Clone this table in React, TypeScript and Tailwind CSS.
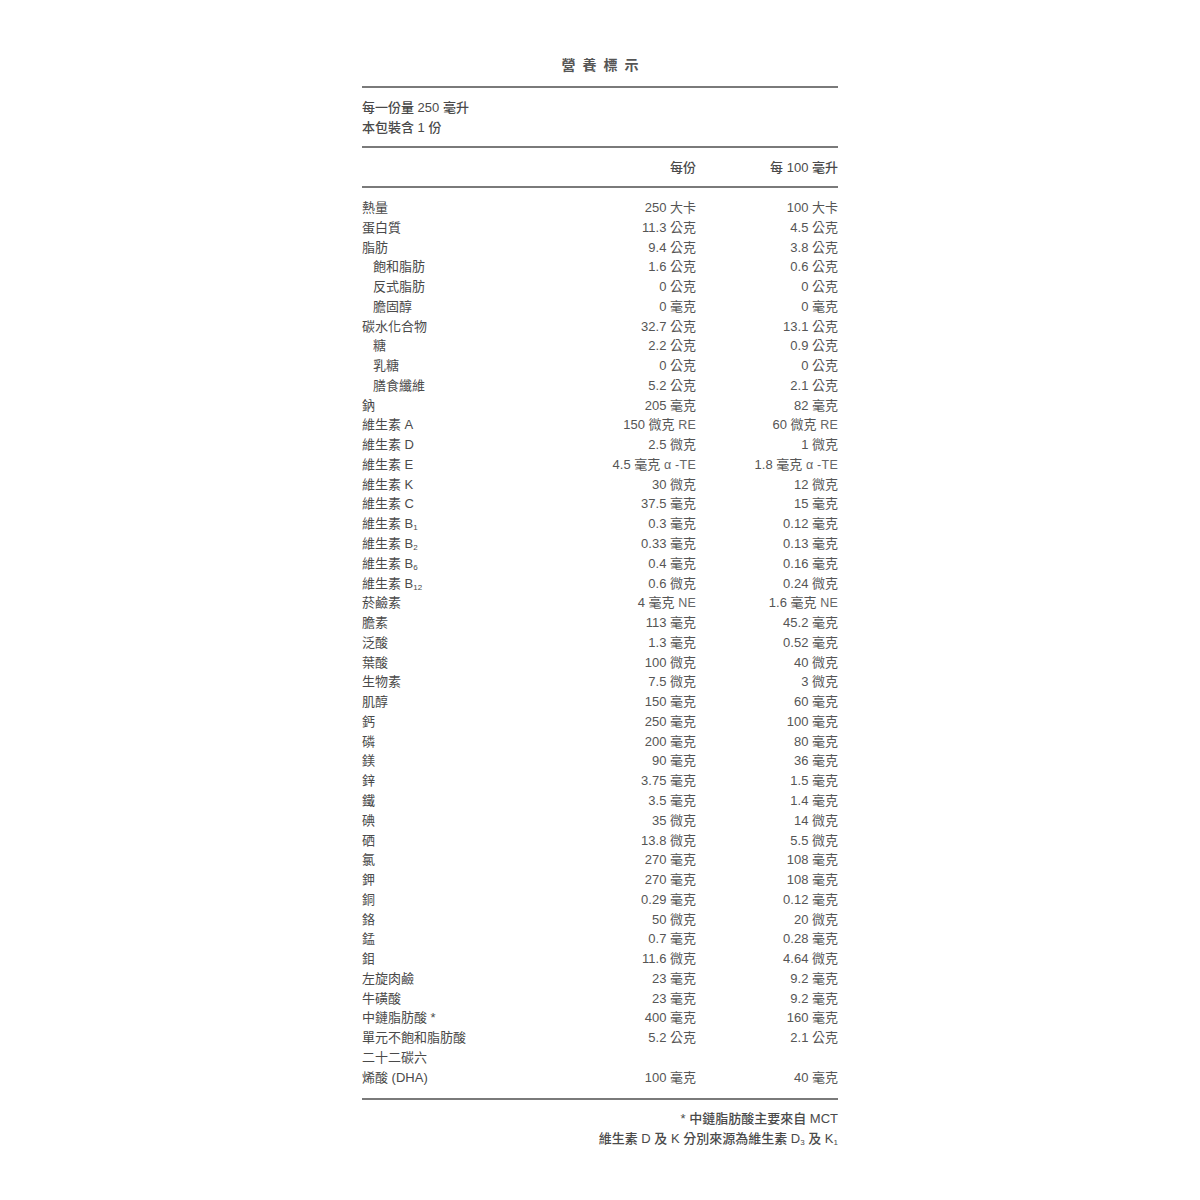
import React from "react";

type Row = { label: React.ReactNode; a?: React.ReactNode; b?: React.ReactNode; indent?: boolean };

const S = ({ children }: { children: React.ReactNode }) => (
  <span className="relative top-[2px] text-[8px] leading-none">{children}</span>
);

const L = ({ children }: { children: React.ReactNode }) => (
  <span className="text-[12.5px] font-light text-[#666] tracking-[0.02em]">{children}</span>
);

const rows: Row[] = [
  { label: "熱量", a: "250 大卡", b: "100 大卡" },
  { label: "蛋白質", a: "11.3 公克", b: "4.5 公克" },
  { label: "脂肪", a: "9.4 公克", b: "3.8 公克" },
  { label: "飽和脂肪", a: "1.6 公克", b: "0.6 公克", indent: true },
  { label: "反式脂肪", a: "0 公克", b: "0 公克", indent: true },
  { label: "膽固醇", a: "0 毫克", b: "0 毫克", indent: true },
  { label: "碳水化合物", a: "32.7 公克", b: "13.1 公克" },
  { label: "糖", a: "2.2 公克", b: "0.9 公克", indent: true },
  { label: "乳糖", a: "0 公克", b: "0 公克", indent: true },
  { label: "膳食纖維", a: "5.2 公克", b: "2.1 公克", indent: true },
  { label: "鈉", a: "205 毫克", b: "82 毫克" },
  { label: "維生素 A", a: <>150 微克 <L>RE</L></>, b: <>60 微克 <L>RE</L></> },
  { label: "維生素 D", a: "2.5 微克", b: "1 微克" },
  { label: "維生素 E", a: <>4.5 毫克 <L>α -TE</L></>, b: <>1.8 毫克 <L>α -TE</L></> },
  { label: "維生素 K", a: "30 微克", b: "12 微克" },
  { label: "維生素 C", a: "37.5 毫克", b: "15 毫克" },
  { label: <>維生素 B<S>1</S></>, a: "0.3 毫克", b: "0.12 毫克" },
  { label: <>維生素 B<S>2</S></>, a: "0.33 毫克", b: "0.13 毫克" },
  { label: <>維生素 B<S>6</S></>, a: "0.4 毫克", b: "0.16 毫克" },
  { label: <>維生素 B<S>12</S></>, a: "0.6 微克", b: "0.24 微克" },
  { label: "菸鹼素", a: <>4 毫克 <L>NE</L></>, b: <>1.6 毫克 <L>NE</L></> },
  { label: "膽素", a: "113 毫克", b: "45.2 毫克" },
  { label: "泛酸", a: "1.3 毫克", b: "0.52 毫克" },
  { label: "葉酸", a: "100 微克", b: "40 微克" },
  { label: "生物素", a: "7.5 微克", b: "3 微克" },
  { label: "肌醇", a: "150 毫克", b: "60 毫克" },
  { label: "鈣", a: "250 毫克", b: "100 毫克" },
  { label: "磷", a: "200 毫克", b: "80 毫克" },
  { label: "鎂", a: "90 毫克", b: "36 毫克" },
  { label: "鋅", a: "3.75 毫克", b: "1.5 毫克" },
  { label: "鐵", a: "3.5 毫克", b: "1.4 毫克" },
  { label: "碘", a: "35 微克", b: "14 微克" },
  { label: "硒", a: "13.8 微克", b: "5.5 微克" },
  { label: "氯", a: "270 毫克", b: "108 毫克" },
  { label: "鉀", a: "270 毫克", b: "108 毫克" },
  { label: "銅", a: "0.29 毫克", b: "0.12 毫克" },
  { label: "鉻", a: "50 微克", b: "20 微克" },
  { label: "錳", a: "0.7 毫克", b: "0.28 毫克" },
  { label: "鉬", a: "11.6 微克", b: "4.64 微克" },
  { label: "左旋肉鹼", a: "23 毫克", b: "9.2 毫克" },
  { label: "牛磺酸", a: "23 毫克", b: "9.2 毫克" },
  { label: "中鏈脂肪酸 *", a: "400 毫克", b: "160 毫克" },
  { label: "單元不飽和脂肪酸", a: "5.2 公克", b: "2.1 公克" },
  { label: "二十二碳六" },
  { label: "烯酸 (DHA)", a: "100 毫克", b: "40 毫克" },
];

const font = { fontFamily: '"Liberation Sans", "Noto Sans CJK TC", sans-serif' };

export default function App() {
  return (
    <div className="min-h-[1200px] w-full bg-white" style={font}>
      <div className="mx-auto w-[476px] pt-[55px] text-[13px] text-[#555]">
        <div className="h-[20px] text-center text-[14px] font-bold leading-[20px] tracking-[0.5em] text-[#555] pl-[0.5em]">
          營養標示
        </div>
        <div className="mt-[11px] h-[2px] bg-[#7a7a7a]" />
        <div className="pt-[10px] pb-[8px] leading-[20px] font-medium text-[#4a4a4a]">
          <div className="h-[20px]">每一份量 250 毫升</div>
          <div className="h-[20px]">本包裝含 1 份</div>
        </div>
        <div className="h-[2px] bg-[#7a7a7a]" />
        <div className="grid h-[38px] grid-cols-[192px_142px_142px] pt-[10px] pb-[8px] leading-[20px] font-medium text-[#4a4a4a]">
          <div />
          <div className="text-right">每份</div>
          <div className="text-right">每 100 毫升</div>
        </div>
        <div className="h-[2px] bg-[#7a7a7a]" />
        <div className="pt-[10px] pb-[11px]">
          {rows.map((r, i) => (
            <div key={i} className="grid h-[19.77px] grid-cols-[192px_142px_142px] leading-[19.77px]">
              <div className={`text-[#4a4a4a] whitespace-nowrap ${r.indent ? "pl-[11px]" : ""}`}>{r.label}</div>
              <div className="text-right whitespace-nowrap text-[#555]">{r.a}</div>
              <div className="text-right whitespace-nowrap text-[#555]">{r.b}</div>
            </div>
          ))}
        </div>
        <div className="h-[2px] bg-[#7a7a7a]" />
        <div className="pt-[9px] text-right leading-[20px] font-medium text-[#4a4a4a]">
          <div className="h-[20px]">* 中鏈脂肪酸主要來自 MCT</div>
          <div className="h-[20px]">維生素 D 及 K 分別來源為維生素 D<S>3</S> 及 K<S>1</S></div>
        </div>
      </div>
    </div>
  );
}
